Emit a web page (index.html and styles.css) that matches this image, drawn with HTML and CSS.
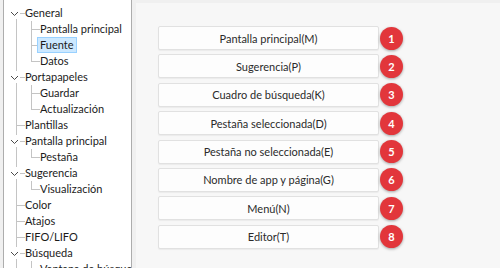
FILE: index.html
```html
<!DOCTYPE html>
<html lang="es">
<head>
    <meta charset="UTF-8">
    <title>Fuente</title>
    <link rel="stylesheet" href="styles.css">
</head>
<body>
    <div class="window">
        <div class="tree">
            <div class="node root first open"><span class="exp"><svg width="9" height="9" viewBox="0 0 9 9"><polyline points="1,3 4.5,6.5 8,3" fill="none" stroke="#4a4a4a" stroke-width="1"/></svg></span><span class="label">General</span></div>
            <div class="node child"><span class="label">Pantalla principal</span></div>
            <div class="node child"><span class="label selected">Fuente</span></div>
            <div class="node child last"><span class="label">Datos</span></div>
            <div class="node root open"><span class="exp"><svg width="9" height="9" viewBox="0 0 9 9"><polyline points="1,3 4.5,6.5 8,3" fill="none" stroke="#4a4a4a" stroke-width="1"/></svg></span><span class="label">Portapapeles</span></div>
            <div class="node child"><span class="label">Guardar</span></div>
            <div class="node child last"><span class="label">Actualización</span></div>
            <div class="node root"><span class="label">Plantillas</span></div>
            <div class="node root open"><span class="exp"><svg width="9" height="9" viewBox="0 0 9 9"><polyline points="1,3 4.5,6.5 8,3" fill="none" stroke="#4a4a4a" stroke-width="1"/></svg></span><span class="label">Pantalla principal</span></div>
            <div class="node child last"><span class="label">Pestaña</span></div>
            <div class="node root open"><span class="exp"><svg width="9" height="9" viewBox="0 0 9 9"><polyline points="1,3 4.5,6.5 8,3" fill="none" stroke="#4a4a4a" stroke-width="1"/></svg></span><span class="label">Sugerencia</span></div>
            <div class="node child last"><span class="label">Visualización</span></div>
            <div class="node root"><span class="label">Color</span></div>
            <div class="node root"><span class="label">Atajos</span></div>
            <div class="node root"><span class="label">FIFO/LIFO</span></div>
            <div class="node root open"><span class="exp"><svg width="9" height="9" viewBox="0 0 9 9"><polyline points="1,3 4.5,6.5 8,3" fill="none" stroke="#4a4a4a" stroke-width="1"/></svg></span><span class="label">Búsqueda</span></div>
            <div class="node child"><span class="label">Ventana de búsqueda</span></div>
        </div>

        <div class="panel">
            <div class="items">
                <div class="item"><button class="btn">Pantalla principal(M)</button><span class="badge">1</span></div>
                <div class="item"><button class="btn">Sugerencia(P)</button><span class="badge">2</span></div>
                <div class="item"><button class="btn">Cuadro de búsqueda(K)</button><span class="badge">3</span></div>
                <div class="item"><button class="btn">Pestaña seleccionada(D)</button><span class="badge">4</span></div>
                <div class="item"><button class="btn">Pestaña no seleccionada(E)</button><span class="badge">5</span></div>
                <div class="item"><button class="btn">Nombre de app y página(G)</button><span class="badge">6</span></div>
                <div class="item"><button class="btn">Menú(N)</button><span class="badge">7</span></div>
                <div class="item"><button class="btn">Editor(T)</button><span class="badge">8</span></div>
            </div>
        </div>
    </div>
</body>
</html>
```

FILE: styles.css
```css
body { margin: 0; background-color: #f0f0f0; font-family: 'Lato', 'Noto Sans', sans-serif; font-size: 11px; color: #1b1b1b; overflow: hidden; }
.window { display: flex; height: 268px; padding-left: 3px; }

/* tree view */
.tree { width: 129px; height: 300px; flex-shrink: 0; background-color: white; border-left: 1px solid #adadad; border-right: 1px solid #adadad; padding-top: 5px; box-sizing: border-box; overflow: hidden; }
.node { display: flex; align-items: center; height: 16px; line-height: 14px; white-space: nowrap; background-repeat: no-repeat; }
.node.root { padding-left: 18px; background-image: linear-gradient(#c4c4c4, #c4c4c4), linear-gradient(#c4c4c4, #c4c4c4); background-position: 12px 0, 12px 8px; background-size: 1px 100%, 9px 1px; }
.node.root.first { background-position: 12px 8px, 12px 8px; background-size: 1px 8px, 9px 1px; }
.node.child { padding-left: 33px; background-image: linear-gradient(#c4c4c4, #c4c4c4), linear-gradient(#c4c4c4, #c4c4c4), linear-gradient(#c4c4c4, #c4c4c4); background-position: 12px 0, 27px 0, 27px 8px; background-size: 1px 100%, 1px 100%, 9px 1px; }
.node.child.last { background-size: 1px 100%, 1px 9px, 9px 1px; }
.node.open { position: relative; }
.exp { position: absolute; left: 5px; top: 2px; width: 11px; height: 12px; background-color: white; display: flex; align-items: center; justify-content: center; }
.label { border: 1px solid transparent; padding: 0 2px; }
.label.selected { background-color: #cce8ff; border-color: #99d1ff; }

/* right panel */
.panel { flex: 1; margin-top: 3px; margin-left: 4px; background-color: #f7f7f7; padding: 23px 0 0 22px; }
.items { display: flex; flex-direction: column; gap: 4.4px; }
.item { display: flex; align-items: center; }
.btn { width: 221px; height: 24px; background-color: #fdfdfd; border: 1px solid #e1e1e1; border-radius: 2px; box-shadow: 0 1px 1px rgba(0,0,0,0.05); font-family: inherit; font-size: 11px; color: #2b2b2b; padding: 0; }
.badge { width: 23px; height: 23px; margin-left: 1px; border-radius: 50%; background-color: #e2363b; color: white; font-weight: bold; font-size: 11px; display: flex; align-items: center; justify-content: center; box-shadow: 0 1px 3px rgba(0,0,0,0.35); }
```
